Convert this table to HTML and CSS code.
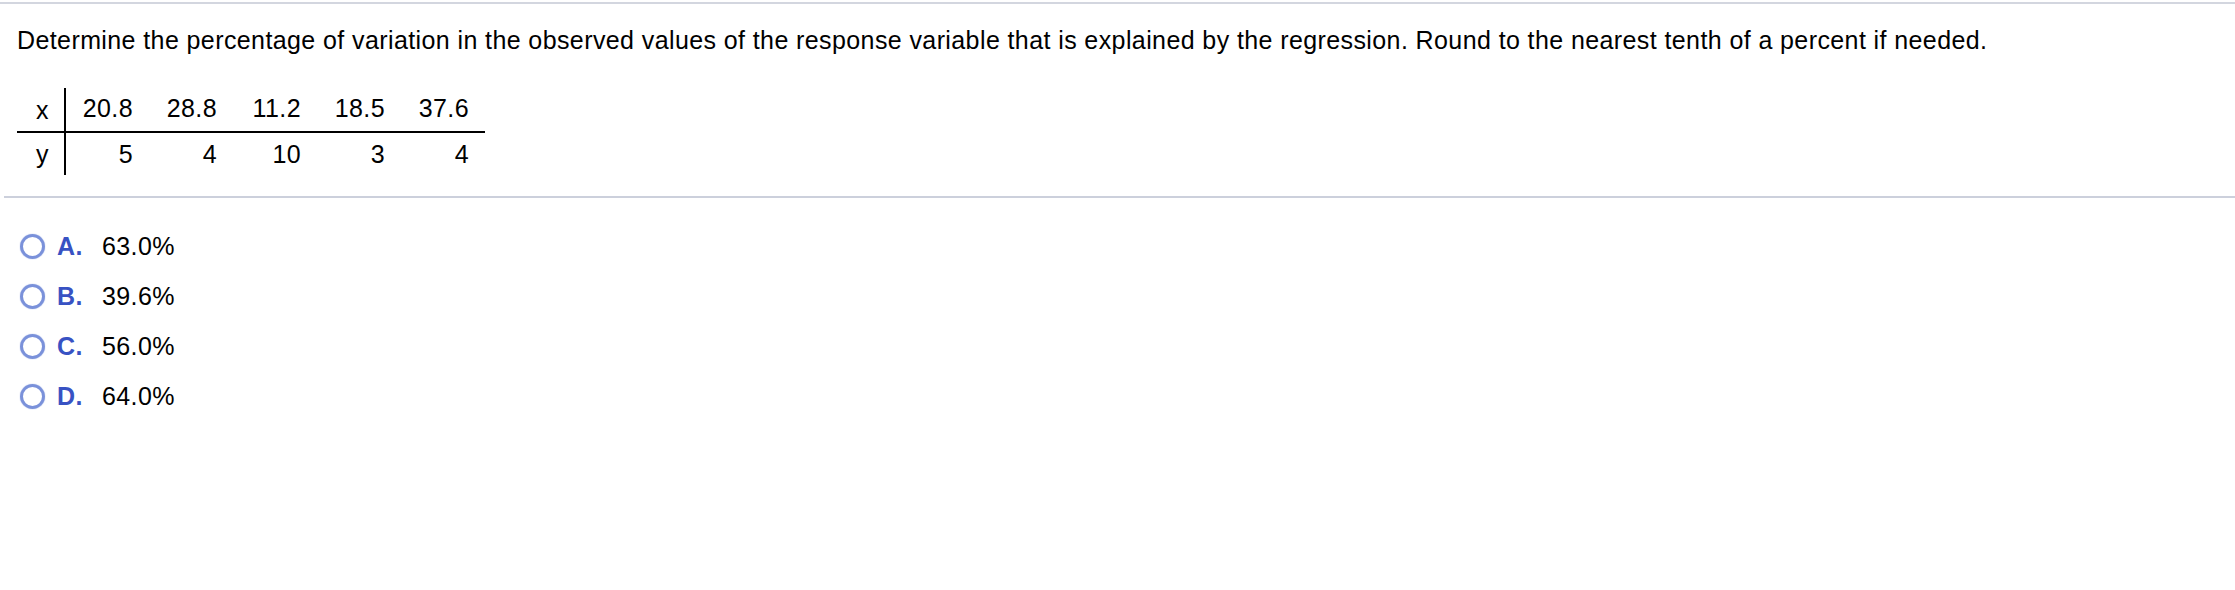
FILE: index.html
```html
<!DOCTYPE html>
<html>
<head>
<meta charset="utf-8">
<link rel="stylesheet" href="styles.css">
</head>
<body>
<div class="top-rule"></div>
<div class="question">
  <p class="prompt">Determine the percentage of variation in the observed values of the response variable that is explained by the regression. Round to the nearest tenth of a percent if needed.</p>
  <table class="data">
    <tr class="row-x">
      <td class="head">x</td>
      <td>20.8</td><td>28.8</td><td>11.2</td><td>18.5</td><td>37.6</td>
    </tr>
    <tr class="row-y">
      <td class="head">y</td>
      <td>5</td><td>4</td><td>10</td><td>3</td><td>4</td>
    </tr>
  </table>
</div>
<div class="divider"></div>
<ul class="choices">
  <li class="choice"><span class="radio"></span><span class="letter">A.</span><span class="value">63.0%</span></li>
  <li class="choice"><span class="radio"></span><span class="letter">B.</span><span class="value">39.6%</span></li>
  <li class="choice"><span class="radio"></span><span class="letter">C.</span><span class="value">56.0%</span></li>
  <li class="choice"><span class="radio"></span><span class="letter">D.</span><span class="value">64.0%</span></li>
</ul>
</body>
</html>
```
FILE: styles.css
```css
html, body {
  margin: 0;
  padding: 0;
  background: #ffffff;
  color: #000000;
  font-family: "Liberation Sans", Arial, sans-serif;
  font-size: 25px;
  letter-spacing: 0.4px;
}

.top-rule {
  height: 2px;
  margin-top: 2px;
  background: #d3d6df;
}

.question {
  padding: 0 0 0 17px;
}

.prompt {
  margin: 0;
  padding-top: 21px;
  line-height: 30px;
}

.data {
  margin-top: 33px;
  border-collapse: collapse;
}

.data td {
  box-sizing: border-box;
  width: 84px;
  padding: 0 16px 0 0;
  text-align: right;
  line-height: 28px;
  vertical-align: middle;
}

.data .head {
  width: 48px;
  padding: 0 15px 0 0;
  border-right: 2px solid #000;
}

.row-x td {
  height: 44px;
  padding-bottom: 3px;
  border-bottom: 2px solid #000;
}

.row-y td {
  height: 43px;
}

.divider {
  margin: 21px 0 0 4px;
  height: 2px;
  background: #ccd0dc;
}

.choices {
  list-style: none;
  margin: 0;
  padding: 23px 0 0 20px;
}

.choice {
  display: flex;
  align-items: center;
  height: 50px;
}

.radio {
  width: 19px;
  height: 19px;
  border: 3px solid #7a91da;
  border-radius: 50%;
  box-shadow: 0 0 1px #7a91da;
}

.letter {
  margin-left: 12px;
  width: 45px;
  font-weight: bold;
  color: #3852c3;
}

.value {
  color: #000;
}
```
